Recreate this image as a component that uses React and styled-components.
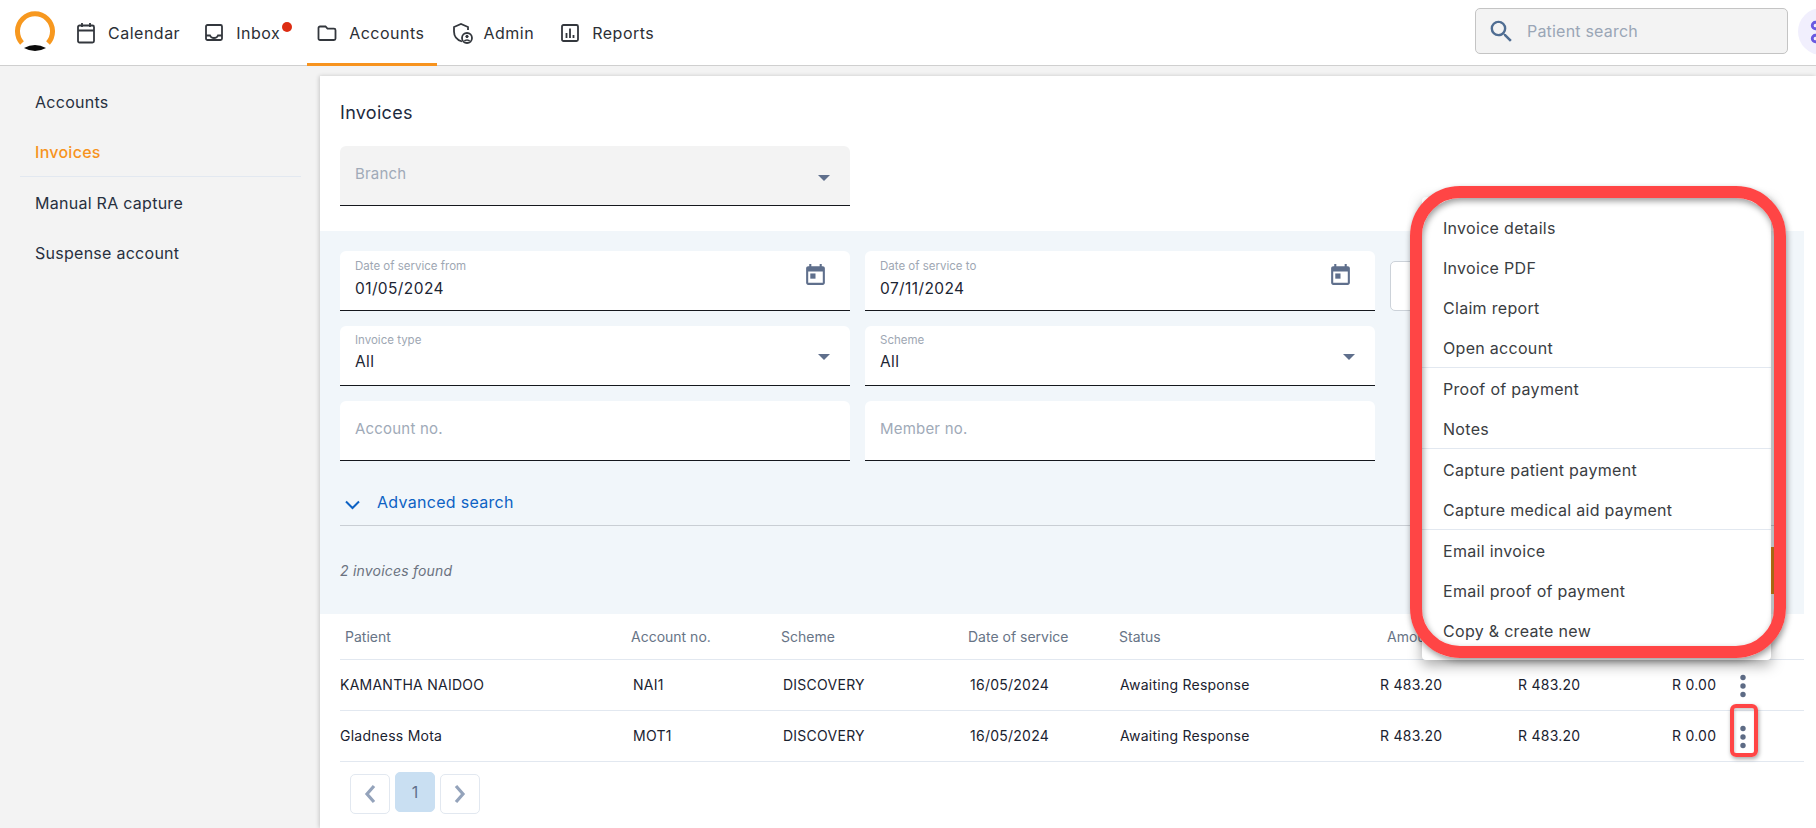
import React from "react";
import styled, { createGlobalStyle } from "styled-components";

const Global = createGlobalStyle`
  html, body { margin: 0; padding: 0; background: #fff; }
  body { font-family: Inter, "Noto Sans", "Liberation Sans", sans-serif; color: #1f2937; }
  * { box-sizing: border-box; }
`;

const Page = styled.div`
  position: relative;
  width: 1816px;
  height: 828px;
  overflow: hidden;
  display: flex;
  flex-direction: column;
`;

const Header = styled.header`
  height: 66px;
  flex-shrink: 0;
  display: flex;
  align-items: stretch;
  padding-left: 15px;
  background: #fff;
  border-bottom: 1px solid #cfcfcf;
`;
const LogoWrap = styled.div`
  width: 40px;
  margin-right: 11px;
  padding-top: 11px;
`;
const Nav = styled.nav`
  display: flex;
`;
const NavItem = styled.a`
  position: relative;
  display: flex;
  align-items: center;
  gap: 10px;
  padding: 2px 12px 0 8px;
  height: 66px;
  font-size: 16px;
  letter-spacing: 0.5px;
  color: #2c2f36;
  border-bottom: ${(p) => (p.$active ? "3px solid #f7931e" : "3px solid transparent")};
  margin-right: ${(p) => p.$trail || 0}px;
`;
const Dot = styled.span`
  position: absolute;
  left: 88px;
  top: 22px;
  width: 10px;
  height: 10px;
  border-radius: 50%;
  background: #dd2c12;
`;
const SearchBox = styled.div`
  margin: 8px 0 0 auto;
  width: 313px;
  height: 46px;
  display: flex;
  align-items: center;
  gap: 11px;
  padding-left: 11px;
  background: #f3f3f3;
  border: 1px solid #c4c4c4;
  border-radius: 5px;
  font-size: 16px;
  letter-spacing: 0.2px;
  color: #9aa6b6;
`;
const Avatar = styled.div`
  margin: 8px -29px 0 10px;
  width: 47px;
  height: 47px;
  flex-shrink: 0;
  border-radius: 50%;
  background: #f1effd;
  display: flex;
  align-items: center;
  justify-content: center;
  color: #6a5ae0;
`;

const Body = styled.div`
  flex: 1;
  display: flex;
  min-height: 0;
  background: #f3f3f3;
`;
const Sidebar = styled.aside`
  width: 320px;
  flex-shrink: 0;
  padding: 11px 19px 0 20px;
`;
const SideLink = styled.a`
  display: flex;
  align-items: center;
  height: 50px;
  padding-left: 15px;
  font-size: 16px;
  letter-spacing: 0.27px;
  color: ${(p) => (p.$active ? "#f7931e" : "#27303f")};
  font-weight: ${(p) => (p.$active ? 500 : 400)};
`;
const SideRule = styled.div`
  height: 1px;
  margin: -1px 0 1px;
  background: #e2e8f0;
`;

const Main = styled.main`
  flex: 1;
  margin-top: 10px;
  padding-right: 12px;
  background: #fff;
  box-shadow: -1px 0 4px rgba(0, 0, 0, 0.18);
  min-width: 0;
`;
const TopBlock = styled.div`
  padding: 27px 0 25px 20px;
`;
const Title = styled.h1`
  margin: 0 0 23px;
  font-size: 18px;
  line-height: 20px;
  font-weight: 400;
  letter-spacing: 0.3px;
  color: #1c2a3e;
`;
const Field = styled.div`
  height: ${(p) => p.$h || 60}px;
  width: ${(p) => (p.$w ? `${p.$w}px` : "auto")};
  display: flex;
  justify-content: space-between;
  padding: ${(p) => p.$top || 18}px 20px 0 15px;
  background: ${(p) => (p.$gray ? "#f3f3f3" : "#fff")};
  border-bottom: 1px solid #15181d;
  border-radius: 6px 6px 0 0;
`;
const FieldText = styled.div`
  display: flex;
  flex-direction: column;
`;
const FloatLabel = styled.span`
  font-size: 11.5px;
  line-height: 14px;
  color: #9ea7b3;
  margin-bottom: ${(p) => p.$mb || 5}px;
`;
const Value = styled.span`
  font-size: 15.5px;
  line-height: 20px;
  letter-spacing: 0.4px;
  color: #1c2533;
`;
const Placeholder = styled.span`
  font-size: 15px;
  line-height: 20px;
  letter-spacing: 0.2px;
  color: #a0aab8;
`;
const Arrow = styled.span`
  margin-top: ${(p) => p.$mt || 21}px;
  width: 0;
  height: 0;
  border-left: 6px solid transparent;
  border-right: 6px solid transparent;
  border-top: 6px solid #5f6f8c;
`;
const IconSlot = styled.span`
  margin: 3px 2px 0 0;
  color: #5f6f8c;
  display: flex;
`;

const Band = styled.section`
  height: 383px;
  padding: 20px 24px 0 20px;
  background: #f1f6fa;
`;
const FormGrid = styled.div`
  display: grid;
  grid-template-columns: 510px 510px 100px;
  gap: 15px;
`;
const GhostBox = styled.div`
  height: 50px;
  margin-top: 10px;
  background: #fff;
  border: 1px solid #ccd2d9;
  border-radius: 5px;
`;
const AdvRow = styled.div`
  margin-top: 30px;
  height: 35px;
  padding: 0 0 13px 5px;
  display: flex;
  align-items: center;
  gap: 17px;
  border-bottom: 1px solid #c9ced4;
  font-size: 16px;
  letter-spacing: 0.3px;
  color: #0d62c4;
`;
const ChevronBox = styled.span`
  display: flex;
  margin-top: 7px;
`;
const CountRow = styled.div`
  margin-top: 21px;
  display: flex;
  justify-content: space-between;
  align-items: center;
`;
const Count = styled.span`
  font-size: 14px;
  font-style: italic;
  letter-spacing: 0.2px;
  color: #6b7280;
`;
const ActionBtn = styled.button`
  width: 110px;
  height: 47px;
  border: 0;
  background: #d98518;
  border-radius: 2px;
`;

const TableWrap = styled.div`
  padding-left: 20px;
`;
const HeadRow = styled.div`
  height: 46px;
  display: grid;
  grid-template-columns: 286px 150px 187px 151px 268px 1fr;
  align-items: center;
  padding-left: 5px;
  font-size: 14px;
  color: #677486;
  border-bottom: 1px solid #e2e8f0;
`;
const DataRow = styled.div`
  height: 51px;
  padding-bottom: 2px;
  display: grid;
  grid-template-columns: 293px 150px 187px 150px 260px 138px 154px 52px 1fr;
  align-items: center;
  font-size: 14px;
  letter-spacing: 0.25px;
  color: #1a2230;
  border-bottom: 1px solid #e2e8f0;
`;
const MenuDots = styled.span`
  display: flex;
  color: #5d6b85;
  margin: 3px 0 0 15px;
`;
const Pager = styled.div`
  display: flex;
  align-items: flex-start;
  gap: 5px;
  padding-left: 10px;
`;
const PageBtn = styled.button`
  width: 40px;
  height: 40px;
  margin-top: ${(p) => (p.$active ? 10 : 12)}px;
  display: flex;
  align-items: center;
  justify-content: center;
  padding: 0;
  font: 400 16px Inter, sans-serif;
  color: #5f6f8c;
  background: ${(p) => (p.$active ? "#c9dff2" : "#fff")};
  border: 1px solid ${(p) => (p.$active ? "#c9dff2" : "#e2e8f0")};
  border-radius: 5px;
`;

const Menu = styled.div`
  position: absolute;
  left: 1422px;
  top: 197px;
  width: 349px;
  height: 463px;
  padding-top: 11px;
  background: #fff;
  border-radius: 4px;
  box-shadow: 0 5px 14px rgba(0, 0, 0, 0.35);
`;
const MenuItem = styled.div`
  height: 40px;
  display: flex;
  align-items: center;
  padding-left: 21px;
  font-size: 16px;
  letter-spacing: 0.3px;
  color: #3a3d42;
`;
const MenuRule = styled.div`
  height: 1px;
  margin: -1px 0 1px;
  background: #e2e8f0;
`;
const MenuCallout = styled.div`
  position: absolute;
  left: 1410px;
  top: 186px;
  width: 376px;
  height: 472px;
  border: 12px solid #ff4545;
  border-radius: 50px;
  box-shadow: 1px 3px 6px rgba(0, 0, 0, 0.4), inset 1px 3px 6px rgba(0, 0, 0, 0.4);
  pointer-events: none;
`;
const DotsCallout = styled.div`
  position: absolute;
  left: 1730px;
  top: 704px;
  width: 28px;
  height: 53px;
  border: 4px solid #ff4545;
  border-radius: 6px;
  box-shadow: 1px 2px 4px rgba(0, 0, 0, 0.35), inset 1px 2px 3px rgba(0, 0, 0, 0.2);
  pointer-events: none;
`;

const Logo = () => (
  <svg width="40" height="40" viewBox="0 0 40 40">
    <path d="M7 32 A17.5 17.5 0 1 1 33 32" fill="none" stroke="#f7981f" strokeWidth="5" />
    <path d="M9 37 Q20 31 31 37 Q20 43 9 37Z" fill="#0b0b0b" />
  </svg>
);
const Ico = ({ children, size = 24 }) => (
  <svg width={size} height={size} viewBox="0 0 24 24" fill="none" stroke="#33373d" strokeWidth="1.8">
    {children}
  </svg>
);
const CalendarIcon = () => (
  <Ico>
    <rect x="4" y="4.5" width="16" height="17" rx="1.5" />
    <path d="M4 9.5h16M8 2v4M16 2v4" />
  </Ico>
);
const InboxIcon = () => (
  <Ico>
    <rect x="4" y="4" width="16" height="15" rx="1.5" />
    <path d="M4 14.500h4c.6 1.600 2 2.500 4 2.500s3.400-.9 4-2.500h4" />
  </Ico>
);
const FolderIcon = () => (
  <Ico>
    <path d="M3.500 7C3.500 6.200 4.200 5.500 5 5.500h5.500l2 2.200H19c.8 0 1.500.7 1.500 1.500v8.300c0 .8-.7 1.500-1.500 1.500H5c-.8 0-1.500-.7-1.500-1.500z" />
  </Ico>
);
const AdminIcon = () => (
  <Ico>
    <path d="M12 20.500C7 19 4 15 4 10.500V6l7-3 7 3v3" />
    <circle cx="17" cy="17" r="5" />
    <circle cx="17" cy="15.500" r="1.200" fill="#33373d" strokeWidth="1" />
    <path d="M14.500 20c.4-1.500 4.600-1.500 5 0" strokeWidth="1.500" />
  </Ico>
);
const ReportsIcon = () => (
  <Ico>
    <rect x="4" y="4" width="16" height="16" rx="1.500" />
    <path d="M8.500 17v-5M12 17V7.500M15.500 17v-3" />
  </Ico>
);
const SearchIcon = () => (
  <svg width="29" height="29" viewBox="0 0 24 24" fill="#4f6d92">
    <path d="M15.500 14h-.79l-.28-.27A6.470 6.470 0 0 0 16 9.500 6.500 6.500 0 1 0 9.500 16c1.610 0 3.090-.59 4.230-1.570l.27.28v.79l5 4.990L20.490 19l-4.990-5zm-6 0C7.010 14 5 11.990 5 9.500S7.010 5 9.500 5 14 7.010 14 9.500 11.990 14 9.500 14z" />
  </svg>
);
const CommandIcon = () => (
  <svg width="26" height="26" viewBox="0 0 24 24" fill="none" stroke="currentColor" strokeWidth="2.600" strokeLinejoin="round">
    <path d="M15 6v12a3 3 0 1 0 3-3H6a3 3 0 1 0 3 3V6a3 3 0 1 0-3 3h12a3 3 0 1 0-3-3" />
  </svg>
);
const DateIcon = () => (
  <svg width="25" height="25" viewBox="0 0 24 24" fill="currentColor">
    <path d="M19 4h-1V2h-2v2H8V2H6v2H5c-1.100 0-2 .9-2 2v14c0 1.100.9 2 2 2h14c1.100 0 2-.9 2-2V6c0-1.100-.9-2-2-2zm0 16H5V9h14v11z" />
    <rect x="7" y="11" width="5" height="5" />
  </svg>
);
const DownChevron = () => (
  <svg width="15" height="10" viewBox="0 0 15 10" fill="none" stroke="#0d62c4" strokeWidth="2">
    <path d="M1 1.500 7.500 8 14 1.500" />
  </svg>
);
const Kebab = () => (
  <svg width="8" height="24" viewBox="0 0 8 24" fill="currentColor">
    <circle cx="4" cy="3.500" r="2.700" />
    <circle cx="4" cy="12" r="2.700" />
    <circle cx="4" cy="20.500" r="2.700" />
  </svg>
);
const PageChevron = ({ d }) => (
  <svg width="14" height="20" viewBox="0 0 14 20" fill="none" stroke="#94a3bb" strokeWidth="3.200">
    <path d={d} />
  </svg>
);

const rows = [
  ["KAMANTHA NAIDOO", "NAI1"],
  ["Gladness Mota", "MOT1"],
];
const menuGroups = [
  ["Invoice details", "Invoice PDF", "Claim report", "Open account"],
  ["Proof of payment", "Notes"],
  ["Capture patient payment", "Capture medical aid payment"],
  ["Email invoice", "Email proof of payment", "Copy & create new"],
];

export default function App() {
  return (
    <Page>
      <Global />
      <Header>
        <LogoWrap>
          <Logo />
        </LogoWrap>
        <Nav>
          <NavItem $trail={2}><CalendarIcon />Calendar</NavItem>
          <NavItem $trail={15}><InboxIcon />Inbox<Dot /></NavItem>
          <NavItem $active $trail={5}><FolderIcon />Accounts</NavItem>
          <NavItem $trail={4}><AdminIcon />Admin</NavItem>
          <NavItem><ReportsIcon />Reports</NavItem>
        </Nav>
        <SearchBox><SearchIcon />Patient search</SearchBox>
        <Avatar><CommandIcon /></Avatar>
      </Header>
      <Body>
        <Sidebar>
          <SideLink>Accounts</SideLink>
          <SideLink $active>Invoices</SideLink>
          <SideRule />
          <SideLink>Manual RA capture</SideLink>
          <SideLink>Suspense account</SideLink>
        </Sidebar>
        <Main>
          <TopBlock>
            <Title>Invoices</Title>
            <Field $gray $w={510}>
              <Placeholder>Branch</Placeholder>
              <Arrow $mt={11} />
            </Field>
          </TopBlock>
          <Band>
            <FormGrid>
              <Field $top={8}>
                <FieldText><FloatLabel $mb={6}>Date of service from</FloatLabel><Value>01/05/2024</Value></FieldText>
                <IconSlot><DateIcon /></IconSlot>
              </Field>
              <Field $top={8}>
                <FieldText><FloatLabel $mb={6}>Date of service to</FloatLabel><Value>07/11/2024</Value></FieldText>
                <IconSlot><DateIcon /></IconSlot>
              </Field>
              <GhostBox />
              <Field $top={7}>
                <FieldText><FloatLabel>Invoice type</FloatLabel><Value>All</Value></FieldText>
                <Arrow />
              </Field>
              <Field $top={7}>
                <FieldText><FloatLabel>Scheme</FloatLabel><Value>All</Value></FieldText>
                <Arrow />
              </Field>
              <span />
              <Field><Placeholder>Account no.</Placeholder></Field>
              <Field><Placeholder>Member no.</Placeholder></Field>
            </FormGrid>
            <AdvRow>
              <ChevronBox><DownChevron /></ChevronBox>
              Advanced search
            </AdvRow>
            <CountRow>
              <Count>2 invoices found</Count>
              <ActionBtn aria-label="Action" />
            </CountRow>
          </Band>
          <TableWrap>
            <HeadRow>
              <span>Patient</span>
              <span>Account no.</span>
              <span>Scheme</span>
              <span>Date of service</span>
              <span>Status</span>
              <span>Amount</span>
            </HeadRow>
            {rows.map(([name, acc]) => (
              <DataRow key={acc}>
                <span>{name}</span>
                <span>{acc}</span>
                <span>DISCOVERY</span>
                <span>16/05/2024</span>
                <span>Awaiting Response</span>
                <span>R 483.20</span>
                <span>R 483.20</span>
                <span>R 0.00</span>
                <MenuDots><Kebab /></MenuDots>
              </DataRow>
            ))}
            <Pager>
              <PageBtn aria-label="Previous"><PageChevron d="M11 2 4 10l7 8" /></PageBtn>
              <PageBtn $active>1</PageBtn>
              <PageBtn aria-label="Next"><PageChevron d="M3 2l7 8-7 8" /></PageBtn>
            </Pager>
          </TableWrap>
        </Main>
      </Body>
      <Menu>
        {menuGroups.map((group, i) => (
          <React.Fragment key={i}>
            {i > 0 && <MenuRule />}
            {group.map((label) => (
              <MenuItem key={label}>{label}</MenuItem>
            ))}
          </React.Fragment>
        ))}
      </Menu>
      <MenuCallout />
      <DotsCallout />
    </Page>
  );
}
